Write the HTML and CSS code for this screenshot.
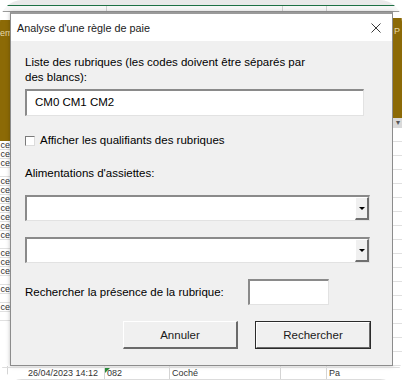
FILE: index.html
```html
<!DOCTYPE html>
<html>
<head>
    <link rel="stylesheet" href="styles.css">
</head>
<body>
    <div class="frame">
        <div class="sheet">
            <div class="colhead">
                <div class="colhead-top"></div>
                <div class="colhead-cells"><span class="h1"></span><span class="h2"></span><span class="h3"></span><span class="h4"></span></div>
            </div>

            <div class="side side-left">
                <div class="gold"><span>em</span></div>
                <div class="cells">
                    <div class="cell">ce</div>
                    <div class="cell">ce</div>
                    <div class="cell">ce</div>
                    <div class="cell"></div>
                    <div class="cell">ce</div>
                    <div class="cell">ce</div>
                    <div class="cell">ce</div>
                    <div class="cell">ce</div>
                    <div class="cell">ce</div>
                    <div class="cell">ce</div>
                    <div class="cell">ce</div>
                    <div class="cell"></div>
                    <div class="cell">ce</div>
                    <div class="cell">ce</div>
                    <div class="cell">ce</div>
                    <div class="cell"></div>
                    <div class="cell">ce</div>
                    <div class="cell"></div>
                    <div class="cell">ce</div>
                    <div class="cell"></div>
                </div>
            </div>

            <div class="dialog">
                <div class="titlebar">
                    <span class="title">Analyse d'une règle de paie</span>
                    <svg class="close" width="10" height="10" viewBox="0 0 10 10">
                        <path d="M0.5 0.5 L9.5 9.5 M9.5 0.5 L0.5 9.5" stroke="#3a3a3a" stroke-width="1" fill="none"/>
                    </svg>
                </div>
                <div class="body">
                    <p class="label">Liste des rubriques (les codes doivent être séparés par<br>des blancs):</p>
                    <div class="textbox textbox-wide">CM0 CM1 CM2</div>

                    <div class="check-row">
                        <span class="checkbox"></span>
                        <span>Afficher les qualifiants des rubriques</span>
                    </div>

                    <p class="label label-alim">Alimentations d'assiettes:</p>
                    <div class="combo">
                        <span class="combo-value"></span>
                        <span class="combo-btn"><span class="arrow"></span></span>
                    </div>
                    <div class="combo combo-second">
                        <span class="combo-value"></span>
                        <span class="combo-btn"><span class="arrow"></span></span>
                    </div>

                    <div class="search-row">
                        <span class="search-label">Rechercher la présence de la rubrique:</span>
                        <div class="textbox textbox-small"></div>
                    </div>

                    <div class="buttons">
                        <button class="btn">Annuler</button>
                        <button class="btn btn-default">Rechercher</button>
                    </div>
                </div>
            </div>

            <div class="side side-right">
                <div class="gold"><span>P</span></div>
                <div class="filter">&#9662;</div>
                <div class="cells">
                    <div class="cell"></div><div class="cell"></div><div class="cell"></div>
                    <div class="cell"></div><div class="cell"></div><div class="cell"></div>
                    <div class="cell"></div><div class="cell"></div><div class="cell"></div>
                    <div class="cell"></div><div class="cell"></div><div class="cell"></div>
                    <div class="cell"></div><div class="cell"></div><div class="cell"></div>
                    <div class="cell"></div><div class="cell"></div>
                </div>
            </div>

            <div class="bottom">
                <div class="row row-cut">
                    <span class="c c1"></span><span class="c c2"></span><span class="c c3"></span><span class="c c4"></span><span class="c c5"></span><span class="c c6"></span>
                </div>
                <div class="row">
                    <span class="c c1"></span><span class="c c2">26/04/2023 14:12</span><span class="c c3"><i class="flag"></i>082</span><span class="c c4">Coché</span><span class="c c5"></span><span class="c c6">Pa</span>
                </div>
            </div>
        </div>
    </div>
</body>
</html>
```

FILE: styles.css
```css
body {
    margin: 0;
    background: #ffffff;
    font-family: "Liberation Sans", Arial, sans-serif;
}
.frame {
    width: 402px;
    height: 380px;
    border-radius: 22px;
    overflow: hidden;
    background: #ffffff;
}
.sheet {
    display: grid;
    grid-template-columns: 10px 383px 9px;
    grid-template-rows: 12px 354px 14px;
    height: 380px;
    background: #ffffff;
}

/* spreadsheet behind the dialog */
.colhead {
    grid-column: 1 / 4;
    display: flex;
    flex-direction: column;
}
.colhead-top {
    height: 5px;
    background: #e9e9e9;
    border-bottom: 1px solid #1e7145;
}
.colhead-cells {
    flex: 1;
    display: flex;
    background: #f7f7f7;
    border-bottom: 1px solid #9a9a9a;
}
.colhead-cells span {
    border-right: 1px solid #d0d0d0;
}
.h1 { width: 106px; }
.h2 { width: 175px; }
.h3 { width: 43px; }
.h4 { flex: 1; border-right: none; }
.side {
    display: flex;
    flex-direction: column;
    background: #ffffff;
    font-size: 9px;
    color: #333;
}
.gold {
    background: #8c6a06;
    color: #e8d9a8;
    font-size: 9px;
    padding-top: 8px;
}
.side-left .gold {
    height: 113px;
    margin-top: 8px;
    text-align: right;
}
.side-right .gold {
    height: 100px;
    margin-top: 6px;
    padding-left: 1px;
}
.filter {
    height: 10px;
    background: #d9d9d9;
    color: #555;
    font-size: 8px;
    line-height: 10px;
    text-align: center;
}
.cells {
    display: flex;
    flex-direction: column;
}
.cell {
    height: 8px;
    line-height: 8px;
    border-bottom: 1px solid #e0e0e0;
    overflow: hidden;
    text-align: right;
    white-space: nowrap;
}
.side-right .cell {
    height: 13px;
}
.bottom {
    grid-column: 1 / 4;
    display: flex;
    flex-direction: column;
    font-size: 9px;
    color: #333;
}
.row {
    display: flex;
    height: 11px;
    line-height: 11px;
    border-bottom: 1px solid #dcdcdc;
}
.row-cut {
    height: 2px;
}
.c {
    box-sizing: border-box;
    border-right: 1px solid #d4d4d4;
    padding-left: 2px;
    white-space: nowrap;
    position: relative;
}
.c1 { width: 8px; }
.c2 { width: 97px; padding-left: 20px; }
.c3 { width: 65px; }
.c4 { width: 111px; }
.c5 { width: 46px; }
.c6 { flex: 1; border-right: none; }
.flag {
    position: absolute;
    left: 0;
    top: 0;
    border-top: 5px solid #2a8a3a;
    border-right: 5px solid transparent;
}

/* dialog */
.dialog {
    display: flex;
    flex-direction: column;
    background: #f0f0f0;
    border: 1px solid #8c8c8c;
    border-top: 2px solid #9a9a9a;
    box-sizing: border-box;
    box-shadow: 0 0 4px rgba(0, 0, 0, 0.25);
    font-size: 11.5px;
    color: #000;
}
.titlebar {
    height: 27px;
    display: flex;
    align-items: center;
    justify-content: space-between;
    padding: 0 11px 0 6px;
    background: #ffffff;
}
.title {
    font-size: 10.8px;
    color: #1a1a1a;
}
.body {
    display: flex;
    flex-direction: column;
    padding: 14px 0 0 14px;
}
.label {
    margin: 0;
    line-height: 15px;
}
.textbox {
    box-sizing: border-box;
    background: #ffffff;
    border-top: 2px solid #8a8a8a;
    border-left: 2px solid #8a8a8a;
    border-right: 1px solid #e2e2e2;
    border-bottom: 1px solid #e2e2e2;
}
.textbox-wide {
    width: 339px;
    height: 27px;
    margin-top: 4px;
    padding-left: 8px;
    line-height: 23px;
}
.check-row {
    display: flex;
    align-items: center;
    gap: 5px;
    margin-top: 17px;
    line-height: 15px;
}
.checkbox {
    width: 10px;
    height: 10px;
    box-sizing: border-box;
    background: #ffffff;
    border-top: 1px solid #7a7a7a;
    border-left: 1px solid #7a7a7a;
    border-right: 1px solid #dcdcdc;
    border-bottom: 1px solid #dcdcdc;
}
.label-alim {
    margin-top: 18px;
}
.combo {
    display: flex;
    width: 345px;
    height: 26px;
    box-sizing: border-box;
    margin-top: 14px;
    background: #ffffff;
    border-top: 2px solid #8a8a8a;
    border-left: 2px solid #8a8a8a;
    border-right: 1px solid #e2e2e2;
    border-bottom: 1px solid #e2e2e2;
}
.combo-second {
    margin-top: 16px;
}
.combo-value {
    flex: 1;
}
.combo-btn {
    width: 14px;
    box-sizing: border-box;
    display: flex;
    align-items: center;
    justify-content: center;
    background: #f0f0f0;
    border-left: 1px solid #ffffff;
    border-top: 1px solid #ffffff;
    border-right: 2px solid #6f6f6f;
    border-bottom: 2px solid #6f6f6f;
}
.arrow {
    width: 0;
    height: 0;
    border-left: 3px solid transparent;
    border-right: 3px solid transparent;
    border-top: 3px solid #000;
}
.search-row {
    display: flex;
    align-items: center;
    margin-top: 16px;
}
.search-label {
    width: 223px;
}
.textbox-small {
    width: 81px;
    height: 26px;
}
.buttons {
    display: flex;
    justify-content: flex-end;
    gap: 17px;
    margin-top: 16px;
    padding-right: 21px;
}
.btn {
    width: 115px;
    height: 28px;
    font-family: "Liberation Sans", Arial, sans-serif;
    font-size: 11.5px;
    color: #1a1a1a;
    background: #f0f0f0;
    border-top: 1px solid #ffffff;
    border-left: 1px solid #ffffff;
    border-right: 2px solid #6a6a6a;
    border-bottom: 2px solid #6a6a6a;
    padding: 0;
}
.btn-default {
    width: 116px;
    outline: 1px solid #2b2b2b;
    outline-offset: -1px;
    border-top: 2px solid #ffffff;
    border-left: 2px solid #ffffff;
}
```
